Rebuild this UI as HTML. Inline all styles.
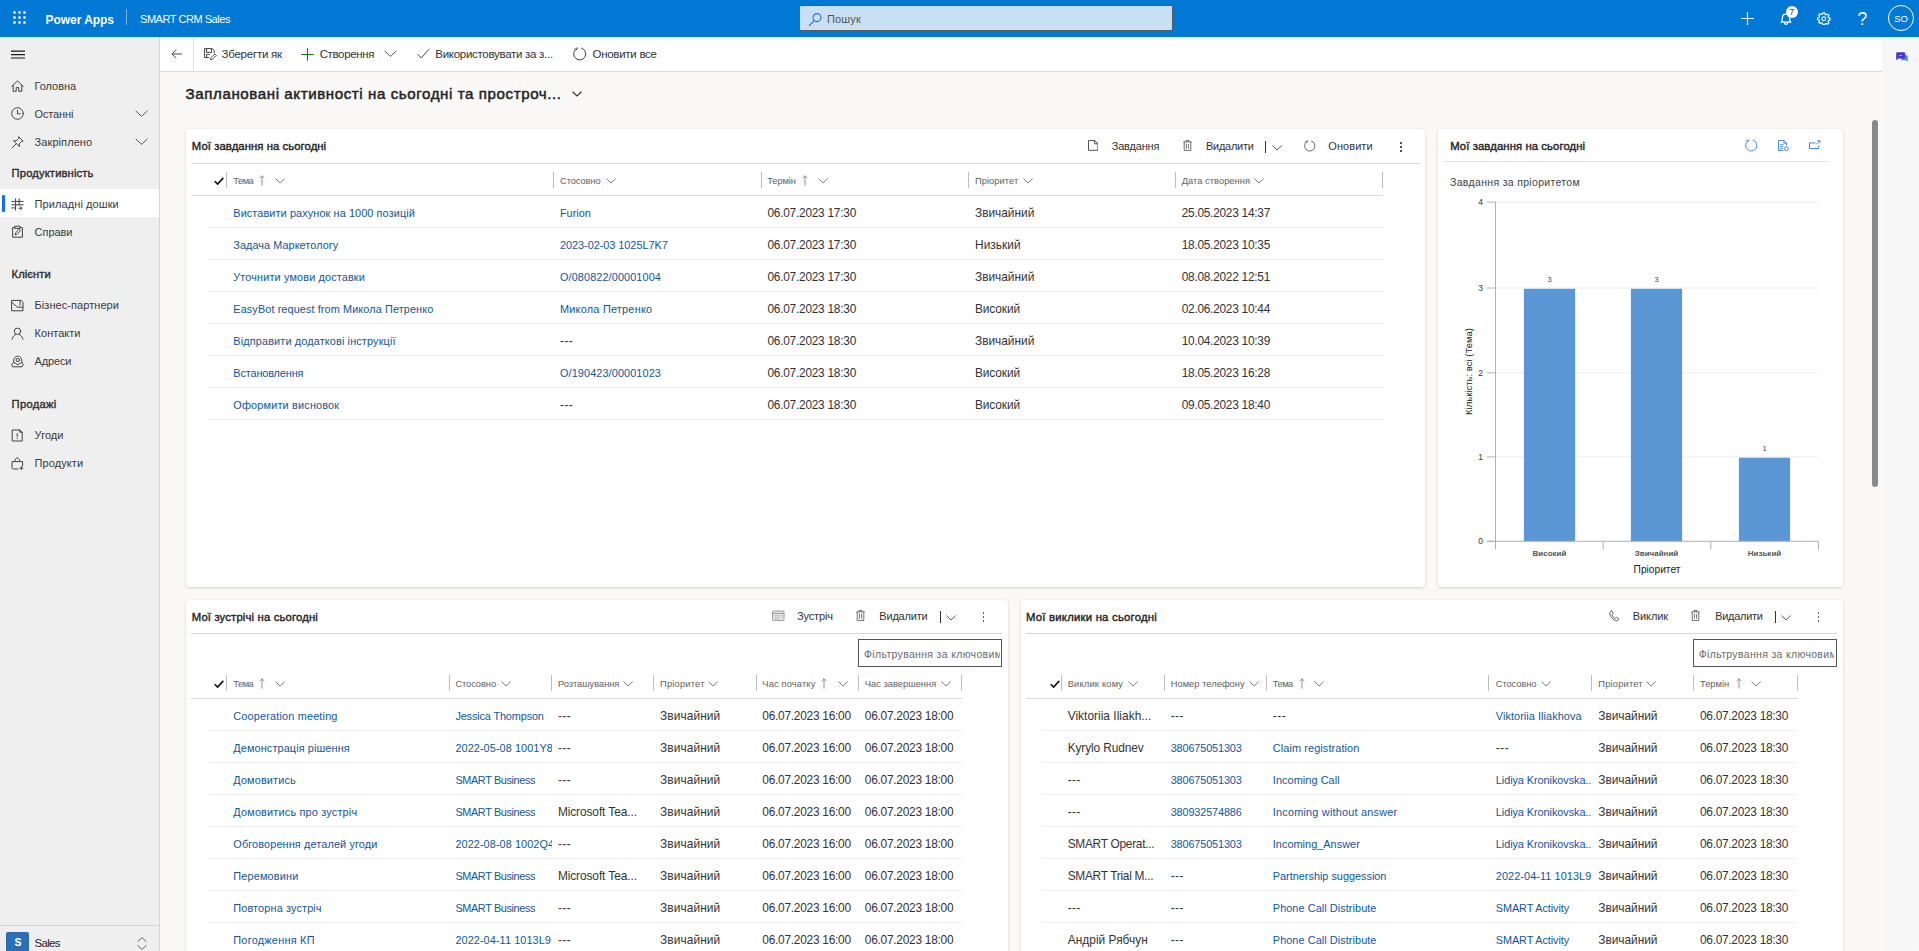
<!DOCTYPE html>
<html lang="uk"><head><meta charset="utf-8"><title>SMART CRM Sales</title>
<style>
html,body{margin:0;padding:0;}
body{width:1919px;height:951px;overflow:hidden;position:relative;background:#faf9f8;font-family:'Liberation Sans',sans-serif;}
.a{position:absolute;box-sizing:border-box;}
.t{position:absolute;white-space:pre;}
.card{position:absolute;background:#fff;border-radius:3px;box-shadow:0 1px 3px rgba(0,0,0,.13),0 0 2px rgba(0,0,0,.08);}
</style></head><body>
<aside aria-label="side pane">
<div class="a" style="left:1882px;top:37px;width:37px;height:914px;background:#f7f7f7;background:repeating-conic-gradient(#f3f3f3 0% 25%,#fbfbfb 0% 50%) 0 0/2px 2px;"></div>
</aside>
<header>
<div class="a" style="left:0px;top:0px;width:1919px;height:37px;background:#0078d4;"></div>
<svg class="a" style="left:12.5px;top:11px;" width="13" height="13" viewBox="0 0 13 13" fill="none"><rect x="0.3" y="0.3" width="2.4" height="2.4" rx=".6" fill="#fff"/><rect x="0.3" y="5.3" width="2.4" height="2.4" rx=".6" fill="#fff"/><rect x="0.3" y="10.3" width="2.4" height="2.4" rx=".6" fill="#fff"/><rect x="5.3" y="0.3" width="2.4" height="2.4" rx=".6" fill="#fff"/><rect x="5.3" y="5.3" width="2.4" height="2.4" rx=".6" fill="#fff"/><rect x="5.3" y="10.3" width="2.4" height="2.4" rx=".6" fill="#fff"/><rect x="10.3" y="0.3" width="2.4" height="2.4" rx=".6" fill="#fff"/><rect x="10.3" y="5.3" width="2.4" height="2.4" rx=".6" fill="#fff"/><rect x="10.3" y="10.3" width="2.4" height="2.4" rx=".6" fill="#fff"/></svg>
<span class="t" style="left:45.60px;top:12px;font-size:12px;line-height:17px;color:#fff;letter-spacing:-0.051px;font-weight:bold;">Power Apps</span>
<div class="a" style="left:126px;top:9px;width:1px;height:16px;background:rgba(255,255,255,.45);"></div>
<span class="t" style="left:140.00px;top:12px;font-size:11px;line-height:15px;color:#fff;letter-spacing:-0.453px;">SMART CRM Sales</span>
<div class="a" style="left:799px;top:5px;width:374px;height:26px;background:#c7e0f4;border:1px solid #5a5a5a;border-radius:2px;"></div>
<svg class="a" style="left:808px;top:11.6px;" width="15" height="15" viewBox="0 0 15 15" fill="none"><circle cx="9" cy="5.6" r="4" stroke="#2b6cb8" stroke-width="1.1"/><path d="M6.2 8.6 L1 13.8" stroke="#2b6cb8" stroke-width="1.1"/></svg>
<span class="t" style="left:827.00px;top:12px;font-size:11px;line-height:15px;color:#555;letter-spacing:0.166px;">Пошук</span>
<svg class="a" style="left:1741px;top:12px;" width="13" height="13" viewBox="0 0 13 13" fill="none"><path d="M6.5 0v13M0 6.5h13" stroke="#fff" stroke-width="1.15"/></svg>
<svg class="a" style="left:1780px;top:12.6px;" width="12" height="12.5" viewBox="0 0 12 12.5" fill="none"><path d="M1.2 9.2c1-1 1.2-2 1.2-4.4C2.4 2.4 4 1 6 1s3.6 1.4 3.6 3.8c0 2.4.2 3.4 1.2 4.4z" stroke="#fff" stroke-width="1.2" stroke-linejoin="round"/><path d="M4.3 9.6c.2 1.1.8 1.7 1.7 1.7s1.5-.6 1.7-1.7" stroke="#fff" stroke-width="1.2"/></svg>
<div class="a" style="left:1786px;top:5.5px;width:12px;height:12px;border-radius:50%;background:#fff;"></div>
<span class="t" style="left:1789.60px;top:6px;font-size:8.5px;line-height:12px;color:#4b2a7a;letter-spacing:0.000px;">7</span>
<svg class="a" style="left:1817.2px;top:11.7px;" width="13.6" height="13.6" viewBox="0 0 15 15" fill="none"><circle cx="7.5" cy="7.5" r="2.1" stroke="#fff" stroke-width="1.25"/><path d="M6.4 1h2.2l.35 1.7 1.2.5 1.45-.95 1.55 1.55-.95 1.45.5 1.2 1.7.35v2.2l-1.7.35-.5 1.2.95 1.45-1.55 1.55-1.45-.95-1.2.5L8.6 14H6.4l-.35-1.7-1.2-.5-1.45.95L1.85 11.2l.95-1.45-.5-1.2L.6 8.6V6.4l1.7-.35.5-1.2-.95-1.45L3.4 1.85l1.45.95 1.2-.5z" stroke="#fff" stroke-width="1.25" stroke-linejoin="round"/></svg>
<span class="t" style="left:1857.40px;top:7px;font-size:17.5px;line-height:24px;color:#fff;letter-spacing:0.000px;">?</span>
<div class="a" style="left:1887.5px;top:4.8px;width:26.5px;height:26.5px;border-radius:50%;border:1px solid #fff;"></div>
<span class="t" style="left:1894.20px;top:12px;font-size:9.5px;line-height:13px;color:#fff;letter-spacing:-0.067px;">SO</span>
</header>
<nav>
<div class="a" style="left:0px;top:37px;width:159px;height:914px;background:#efefef;"></div>
<div class="a" style="left:159px;top:37px;width:1px;height:914px;background:#d6d6d6;"></div>
<svg class="a" style="left:11px;top:50px;" width="14" height="9" viewBox="0 0 14 9" fill="none"><path d="M0 1.2h14M0 4.6h14M0 8h14" stroke="#1b1b1b" stroke-width="1.2"/></svg>
<div class="a" style="left:0px;top:189px;width:159px;height:28px;background:#fff;"></div>
<div class="a" style="left:2px;top:194.5px;width:3px;height:17px;background:#0f6cff;border-radius:1px;"></div>
<span class="t" style="left:34.60px;top:79px;font-size:11px;line-height:15px;color:#3b3a39;letter-spacing:-0.042px;">Головна</span>
<span class="t" style="left:34.60px;top:107px;font-size:11px;line-height:15px;color:#3b3a39;letter-spacing:-0.155px;">Останні</span>
<span class="t" style="left:34.60px;top:135px;font-size:11px;line-height:15px;color:#3b3a39;letter-spacing:0.077px;">Закріплено</span>
<span class="t" style="left:11.60px;top:165px;font-size:11.2px;line-height:16px;color:#323130;letter-spacing:0.148px;-webkit-text-stroke:0.4px #323130;">Продуктивність</span>
<span class="t" style="left:34.60px;top:197px;font-size:11px;line-height:15px;color:#3b3a39;letter-spacing:0.085px;">Приладні дошки</span>
<span class="t" style="left:34.60px;top:225px;font-size:11px;line-height:15px;color:#3b3a39;letter-spacing:-0.054px;">Справи</span>
<span class="t" style="left:11.60px;top:266px;font-size:11.2px;line-height:16px;color:#323130;letter-spacing:0.072px;-webkit-text-stroke:0.4px #323130;">Клієнти</span>
<span class="t" style="left:34.60px;top:298px;font-size:11px;line-height:15px;color:#3b3a39;letter-spacing:0.059px;">Бізнес-партнери</span>
<span class="t" style="left:34.60px;top:326px;font-size:11px;line-height:15px;color:#3b3a39;letter-spacing:0.017px;">Контакти</span>
<span class="t" style="left:34.60px;top:354px;font-size:11px;line-height:15px;color:#3b3a39;letter-spacing:-0.173px;">Адреси</span>
<span class="t" style="left:11.60px;top:396px;font-size:11.2px;line-height:16px;color:#323130;letter-spacing:0.290px;-webkit-text-stroke:0.4px #323130;">Продажі</span>
<span class="t" style="left:34.60px;top:428px;font-size:11px;line-height:15px;color:#3b3a39;letter-spacing:0.039px;">Угоди</span>
<span class="t" style="left:34.60px;top:456px;font-size:11px;line-height:15px;color:#3b3a39;letter-spacing:0.083px;">Продукти</span>
<svg class="a" style="left:11px;top:79.5px;" width="13" height="13" viewBox="0 0 13 13" fill="none"><path d="M.8 6.3 6.5.9l5.7 5.4M2.2 5.4v5.9h3V7.6h2.6v3.7h3V5.4" stroke="#424242" stroke-width="1" stroke-linejoin="round" stroke-linecap="round"/></svg>
<svg class="a" style="left:11px;top:107px;" width="13" height="13" viewBox="0 0 13 13" fill="none"><circle cx="6.5" cy="6.5" r="5.8" stroke="#424242" stroke-width="1" stroke-linejoin="round" stroke-linecap="round"/><path d="M6.5 3.2v3.6h2.6" stroke="#424242" stroke-width="1" stroke-linejoin="round" stroke-linecap="round"/></svg>
<svg class="a" style="left:11px;top:135.5px;" width="13" height="13" viewBox="0 0 13 13" fill="none"><path d="M7.8.9l4.3 4.3-1.6.4-2.2 2.2.1 2.8-5.9-5.9 2.8.1 2.2-2.2zM5.3 7.7.9 12.1" stroke="#424242" stroke-width="1" stroke-linejoin="round" stroke-linecap="round"/></svg>
<svg class="a" style="left:11px;top:197.5px;" width="13" height="13" viewBox="0 0 13 13" fill="none"><path d="M4.6.8v11.4M8.2.8v6.4M.8 3.4h11.4M.8 6.8h11.4M.8 9.9h3.8M7.6 10.2h2.8M9.6 8.8l1.6 1.4-1.6 1.4" stroke="#424242" stroke-width="1" stroke-linejoin="round" stroke-linecap="round"/></svg>
<svg class="a" style="left:11px;top:224.5px;" width="13" height="13" viewBox="0 0 13 13" fill="none"><path d="M3.8 2.6H1.6v9.6h9.8V2.6H9.2M4 1.2h5v2.2H4zM4.2 9.6l.5-1.9 3.6-3.6 1.4 1.4-3.6 3.6z" stroke="#424242" stroke-width="1" stroke-linejoin="round" stroke-linecap="round"/></svg>
<svg class="a" style="left:11px;top:298.5px;" width="13" height="13" viewBox="0 0 13 13" fill="none"><path d="M1 1.4h9.2l1.8 1.8v8.6H1zM1.2 3.6l5.2 4.6h5.4M9 1.6v4.6" stroke="#424242" stroke-width="1" stroke-linejoin="round" stroke-linecap="round"/></svg>
<svg class="a" style="left:11px;top:326.5px;" width="13" height="13" viewBox="0 0 13 13" fill="none"><circle cx="6.5" cy="4.3" r="3.2" stroke="#424242" stroke-width="1" stroke-linejoin="round" stroke-linecap="round"/><path d="M1 12.2c.6-2.6 2.4-4.3 3.6-4.6M12 12.2c-.6-2.6-2.4-4.3-3.6-4.6" stroke="#424242" stroke-width="1" stroke-linejoin="round" stroke-linecap="round"/></svg>
<svg class="a" style="left:11px;top:354.5px;" width="13" height="13" viewBox="0 0 13 13" fill="none"><path d="M2.6 7.2C2.4 3.6 4 1.2 6.8 1.2s4.3 2.4 4.1 6M.8 9.6l1.8-2.4 4.2 2.6 4.1-2.6 1.4 2.4-1.2 2.2H2z" stroke="#424242" stroke-width="1" stroke-linejoin="round" stroke-linecap="round"/><circle cx="6.8" cy="5" r="1.7" stroke="#424242" stroke-width="1" stroke-linejoin="round" stroke-linecap="round"/></svg>
<svg class="a" style="left:11px;top:428.5px;" width="13" height="13" viewBox="0 0 13 13" fill="none"><path d="M1.6 1h7.2v2.2h2.4V12H1.6zM8.8 1l2.4 2.2M6.2 4.6v3M6.2 9.3v.4" stroke="#424242" stroke-width="1" stroke-linejoin="round" stroke-linecap="round"/></svg>
<svg class="a" style="left:11px;top:456.5px;" width="13" height="13" viewBox="0 0 13 13" fill="none"><path d="M7 12H2.4C1.5 12 1 11.5 1 10.6V4.6h10.6v4.2M3.8 4.6C3.8 2.3 4.8 1 6.3 1s2.5 1.3 2.5 3.6M10.4 9.6v3M8.9 11.1h3" stroke="#424242" stroke-width="1" stroke-linejoin="round" stroke-linecap="round"/></svg>
<svg class="a" style="left:135px;top:110px;" width="13" height="8" viewBox="0 0 13 8" fill="none"><path d="M.6.8l5.9 5.6L12.4.8" stroke="#555" stroke-width="1"/></svg>
<svg class="a" style="left:135px;top:138px;" width="13" height="8" viewBox="0 0 13 8" fill="none"><path d="M.6.8l5.9 5.6L12.4.8" stroke="#555" stroke-width="1"/></svg>
<div class="a" style="left:0px;top:925px;width:159px;height:1px;background:#d2d2d2;"></div>
<div class="a" style="left:6.3px;top:932px;width:22.5px;height:22.5px;background:#2b70b5;border-radius:2px;"></div>
<span class="t" style="left:14.40px;top:935px;font-size:10.5px;line-height:15px;color:#fff;letter-spacing:0.000px;font-weight:bold;">S</span>
<span class="t" style="left:34.60px;top:935px;font-size:11.5px;line-height:16px;color:#1f1f1f;letter-spacing:-0.716px;">Sales</span>
<svg class="a" style="left:136.5px;top:936.5px;" width="10" height="13" viewBox="0 0 10 13" fill="none"><path d="M.6 4.7 5 .6 9.4 4.7M.6 8.3 5 12.4 9.4 8.3" stroke="#555" stroke-width=".9"/></svg>
</nav>
<main>
<div role="toolbar">
<div class="a" style="left:160px;top:37px;width:1722px;height:34px;background:#fff;"></div>
<div class="a" style="left:160px;top:71px;width:1722px;height:1px;background:#dcdcdc;"></div>
<div class="a" style="left:193px;top:37px;width:1px;height:34px;background:#dcdcdc;"></div>
<svg class="a" style="left:171px;top:48.5px;" width="11" height="10" viewBox="0 0 11 10" fill="none"><path d="M10.8 5H.9M5.2.7.9 5l4.3 4.3" stroke="#424242" stroke-width="1"/></svg>
<svg class="a" style="left:203.5px;top:47.5px;" width="13" height="12.5" viewBox="0 0 13 12.5" fill="none"><path d="M.6.6h7.8l1.8 1.8v3M.6.6v9h4.6M2.6.8v3.6h5V.8M2.6 9.4V6.4h3.2" stroke="#424242" stroke-width="1"/><path d="M6.4 11.9l.5-2 4-4 1.5 1.5-4 4z" stroke="#424242" stroke-width=".9"/></svg>
<span class="t" style="left:221.50px;top:46px;font-size:11.5px;line-height:16px;color:#333;letter-spacing:-0.231px;">Зберегти як</span>
<svg class="a" style="left:300.5px;top:48px;" width="13" height="13" viewBox="0 0 13 13" fill="none"><path d="M6.5 .2v12.6M.2 6.5h12.6" stroke="#107c10" stroke-width="1.1"/></svg>
<span class="t" style="left:319.70px;top:46px;font-size:11.5px;line-height:16px;color:#333;letter-spacing:-0.375px;">Створення</span>
<svg class="a" style="left:384px;top:50px;" width="13" height="8" viewBox="0 0 13 8" fill="none"><path d="M.6.8l5.9 5.6L12.4.8" stroke="#555" stroke-width="1"/></svg>
<svg class="a" style="left:416.5px;top:48px;" width="13" height="11" viewBox="0 0 13 11" fill="none"><path d="M.6 6.2l3.6 3.8L12.4.8" stroke="#424242" stroke-width="1"/></svg>
<span class="t" style="left:435.30px;top:46px;font-size:11.5px;line-height:16px;color:#333;letter-spacing:-0.287px;">Використовувати за з...</span>
<svg class="a" style="left:573px;top:47.3px;" width="14" height="14" viewBox="0 0 14 14" fill="none"><path d="M8.2 1.1A6 6 0 1 1 3.4 1.9" stroke="#424242" stroke-width="1"/><path d="M3.6 .2v2.4H1.2" stroke="#424242" stroke-width="1" transform="rotate(18 3.6 2.6)"/></svg>
<span class="t" style="left:592.50px;top:46px;font-size:11.5px;line-height:16px;color:#333;letter-spacing:-0.277px;">Оновити все</span>
</div>
<span class="t" style="left:185.60px;top:83px;font-size:15.1px;line-height:21px;color:#242424;letter-spacing:0.585px;-webkit-text-stroke:0.5px #242424;">Заплановані активності на сьогодні та простроч...</span>
<svg class="a" style="left:571.5px;top:91px;" width="10" height="6" viewBox="0 0 10 6" fill="none"><path d="M.6.7l4.4 4.2L9.4.7" stroke="#333" stroke-width="1.2"/></svg>
<div class="a" style="left:1872px;top:120px;width:6px;height:367px;background:#8a8a8a;border-radius:3px;"></div>
<svg class="a" style="left:1895.5px;top:51.5px;" width="12" height="10" viewBox="0 0 12 10" fill="none"><path d="M6 3.2h4.4c.8 0 1.3.5 1.3 1.3v5.2l-1.8-1.5H5.2z" fill="#3f8ef5"/><path d="M.2 1.6C.2.7.8.2 1.6.2h6.2c.8 0 1.4.5 1.4 1.4v3.6c0 .9-.6 1.4-1.4 1.4H2.4L.2 8.2z" fill="#4b35c9"/><rect x="3.3" y="3" width="2.8" height=".9" fill="#b9aef5"/></svg>
<section aria-label="tasks">
<div class="card" style="left:186px;top:129px;width:1239px;height:458px;"></div>
<span class="t" style="left:191.80px;top:138px;font-size:11.3px;line-height:16px;color:#242424;letter-spacing:0.067px;-webkit-text-stroke:0.4px #242424;">Мої завдання на сьогодні</span>
<svg class="a" style="left:1087.5px;top:140.3px;" width="10.5" height="10.8" viewBox="0 0 10.5 10.8" fill="none"><path d="M6.6.5H.5v9.8h9.4V3.8M6.6.5v3.3h3.3M6.6.5l3.3 3.3" stroke="#424242" stroke-width=".9"/></svg>
<span class="t" style="left:1111.70px;top:139px;font-size:11px;line-height:15px;color:#333;letter-spacing:-0.203px;">Завдання</span>
<svg class="a" style="left:1182.5px;top:139.7px;" width="9" height="11" viewBox="0 0 9 11" fill="none"><path d="M.3 1.9h8.4M3 1.7V.5h3v1.2M1.2 2v8.4h6.6V2M3.4 3.8v4.8M5.6 3.8v4.8" stroke="#4a4a4a" stroke-width=".8"/></svg>
<span class="t" style="left:1206.00px;top:139px;font-size:11px;line-height:15px;color:#333;letter-spacing:-0.283px;">Видалити</span>
<div class="a" style="left:1265px;top:140.5px;width:1px;height:12px;background:#333;"></div>
<svg class="a" style="left:1272px;top:144.5px;" width="10.2" height="6" viewBox="0 0 10.2 6" fill="none"><path d="M.5.6l4.6 4.4L9.7.6" stroke="#444" stroke-width=".9"/></svg>
<svg class="a" style="left:1303.5px;top:140px;" width="12" height="12" viewBox="0 0 14 14" fill="none"><path d="M8.2 1.1A6 6 0 1 1 3.4 1.9" stroke="#424242" stroke-width="0.9"/><path d="M3.6 .2v2.4H1.2" stroke="#424242" stroke-width="0.9" transform="rotate(18 3.6 2.6)"/></svg>
<span class="t" style="left:1328.30px;top:139px;font-size:11px;line-height:15px;color:#333;letter-spacing:0.068px;">Оновити</span>
<div class="a" style="left:1400.45px;top:142.45px;width:1.1px;height:1.1px;background:#444;border-radius:50%;"></div>
<div class="a" style="left:1400.45px;top:146.45px;width:1.1px;height:1.1px;background:#444;border-radius:50%;"></div>
<div class="a" style="left:1400.45px;top:150.45px;width:1.1px;height:1.1px;background:#444;border-radius:50%;"></div>
<div class="a" style="left:191px;top:163px;width:1228.5px;height:1px;background:#d9d9d9;"></div>
<svg class="a" style="left:214px;top:176.5px;" width="10" height="8" viewBox="0 0 10 8" fill="none"><path d="M.7 4.2l2.9 2.9L9.3.9" stroke="#111" stroke-width="1.6"/></svg>
<div class="a" style="left:226px;top:172px;width:1px;height:16px;background:#bdbdbd;"></div>
<div class="a" style="left:553px;top:172px;width:1px;height:16px;background:#bdbdbd;"></div>
<div class="a" style="left:761px;top:172px;width:1px;height:16px;background:#bdbdbd;"></div>
<div class="a" style="left:968px;top:172px;width:1px;height:16px;background:#bdbdbd;"></div>
<div class="a" style="left:1175px;top:172px;width:1px;height:16px;background:#bdbdbd;"></div>
<div class="a" style="left:1382px;top:172px;width:1px;height:16px;background:#bdbdbd;"></div>
<span class="t" style="left:233.30px;top:175px;font-size:9.3px;line-height:13px;color:#616161;letter-spacing:-0.473px;">Тема</span>
<svg class="a" style="left:259.3px;top:175.0px;" width="6" height="11" viewBox="0 0 6 11" fill="none"><path d="M3 10.6V.8M.6 3.2 3 .8l2.4 2.4" stroke="#777" stroke-width=".8"/></svg>
<svg class="a" style="left:275px;top:177.8px;" width="10.2" height="6" viewBox="0 0 10.2 6" fill="none"><path d="M.5.6l4.6 4.4L9.7.6" stroke="#6a6a6a" stroke-width=".9"/></svg>
<span class="t" style="left:560.00px;top:175px;font-size:9.3px;line-height:13px;color:#616161;letter-spacing:-0.077px;">Стосовно</span>
<svg class="a" style="left:605.5px;top:177.8px;" width="10.2" height="6" viewBox="0 0 10.2 6" fill="none"><path d="M.5.6l4.6 4.4L9.7.6" stroke="#6a6a6a" stroke-width=".9"/></svg>
<span class="t" style="left:767.30px;top:175px;font-size:9.3px;line-height:13px;color:#616161;letter-spacing:-0.116px;">Термін</span>
<svg class="a" style="left:802px;top:175.0px;" width="6" height="11" viewBox="0 0 6 11" fill="none"><path d="M3 10.6V.8M.6 3.2 3 .8l2.4 2.4" stroke="#777" stroke-width=".8"/></svg>
<svg class="a" style="left:818px;top:177.8px;" width="10.2" height="6" viewBox="0 0 10.2 6" fill="none"><path d="M.5.6l4.6 4.4L9.7.6" stroke="#6a6a6a" stroke-width=".9"/></svg>
<span class="t" style="left:975.00px;top:175px;font-size:9.3px;line-height:13px;color:#616161;letter-spacing:0.063px;">Пріоритет</span>
<svg class="a" style="left:1022.7px;top:177.8px;" width="10.2" height="6" viewBox="0 0 10.2 6" fill="none"><path d="M.5.6l4.6 4.4L9.7.6" stroke="#6a6a6a" stroke-width=".9"/></svg>
<span class="t" style="left:1181.70px;top:175px;font-size:9.3px;line-height:13px;color:#616161;letter-spacing:0.040px;">Дата створення</span>
<svg class="a" style="left:1254.3px;top:177.8px;" width="10.2" height="6" viewBox="0 0 10.2 6" fill="none"><path d="M.5.6l4.6 4.4L9.7.6" stroke="#6a6a6a" stroke-width=".9"/></svg>
<div class="a" style="left:191px;top:195px;width:1192px;height:1px;background:#d9d9d9;"></div>
<span class="t" style="left:233.30px;top:206px;font-size:10.9px;line-height:15px;color:#0f5899;letter-spacing:0.093px;">Виставити рахунок на 1000 позицій</span>
<span class="t" style="left:560.00px;top:206px;font-size:10.9px;line-height:15px;color:#0f5899;letter-spacing:-0.029px;">Furion</span>
<span class="t" style="left:767.50px;top:205px;font-size:11.9px;line-height:16px;color:#333;letter-spacing:-0.255px;">06.07.2023 17:30</span>
<span class="t" style="left:975.00px;top:205px;font-size:11.9px;line-height:16px;color:#333;letter-spacing:-0.017px;">Звичайний</span>
<span class="t" style="left:1181.70px;top:205px;font-size:11.9px;line-height:16px;color:#333;letter-spacing:-0.267px;">25.05.2023 14:37</span>
<div class="a" style="left:207px;top:227px;width:1176px;height:1px;background:#ededed;"></div>
<span class="t" style="left:233.30px;top:238px;font-size:10.9px;line-height:15px;color:#0f5899;letter-spacing:0.050px;">Задача Маркетологу</span>
<span class="t" style="left:560.00px;top:238px;font-size:10.9px;line-height:15px;color:#0f5899;letter-spacing:-0.037px;">2023-02-03 1025L7K7</span>
<span class="t" style="left:767.50px;top:237px;font-size:11.9px;line-height:16px;color:#333;letter-spacing:-0.255px;">06.07.2023 17:30</span>
<span class="t" style="left:975.00px;top:237px;font-size:11.9px;line-height:16px;color:#333;letter-spacing:0.046px;">Низький</span>
<span class="t" style="left:1181.70px;top:237px;font-size:11.9px;line-height:16px;color:#333;letter-spacing:-0.267px;">18.05.2023 10:35</span>
<div class="a" style="left:207px;top:259px;width:1176px;height:1px;background:#ededed;"></div>
<span class="t" style="left:233.30px;top:270px;font-size:10.9px;line-height:15px;color:#0f5899;letter-spacing:0.132px;">Уточнити умови доставки</span>
<span class="t" style="left:560.00px;top:270px;font-size:10.9px;line-height:15px;color:#0f5899;letter-spacing:0.098px;">O/080822/00001004</span>
<span class="t" style="left:767.50px;top:269px;font-size:11.9px;line-height:16px;color:#333;letter-spacing:-0.255px;">06.07.2023 17:30</span>
<span class="t" style="left:975.00px;top:269px;font-size:11.9px;line-height:16px;color:#333;letter-spacing:-0.017px;">Звичайний</span>
<span class="t" style="left:1181.70px;top:269px;font-size:11.9px;line-height:16px;color:#333;letter-spacing:-0.267px;">08.08.2022 12:51</span>
<div class="a" style="left:207px;top:291px;width:1176px;height:1px;background:#ededed;"></div>
<span class="t" style="left:233.30px;top:302px;font-size:10.9px;line-height:15px;color:#0f5899;letter-spacing:0.094px;">EasyBot request from Микола Петренко</span>
<span class="t" style="left:560.00px;top:302px;font-size:10.9px;line-height:15px;color:#0f5899;letter-spacing:0.227px;">Микола Петренко</span>
<span class="t" style="left:767.50px;top:301px;font-size:11.9px;line-height:16px;color:#333;letter-spacing:-0.255px;">06.07.2023 18:30</span>
<span class="t" style="left:975.00px;top:301px;font-size:11.9px;line-height:16px;color:#333;letter-spacing:-0.109px;">Високий</span>
<span class="t" style="left:1181.70px;top:301px;font-size:11.9px;line-height:16px;color:#333;letter-spacing:-0.267px;">02.06.2023 10:44</span>
<div class="a" style="left:207px;top:323px;width:1176px;height:1px;background:#ededed;"></div>
<span class="t" style="left:233.30px;top:334px;font-size:10.9px;line-height:15px;color:#0f5899;letter-spacing:0.132px;">Відправити додаткові інструкції</span>
<span class="t" style="left:560.00px;top:333px;font-size:11.9px;line-height:16px;color:#333;letter-spacing:0.470px;">---</span>
<span class="t" style="left:767.50px;top:333px;font-size:11.9px;line-height:16px;color:#333;letter-spacing:-0.255px;">06.07.2023 18:30</span>
<span class="t" style="left:975.00px;top:333px;font-size:11.9px;line-height:16px;color:#333;letter-spacing:-0.017px;">Звичайний</span>
<span class="t" style="left:1181.70px;top:333px;font-size:11.9px;line-height:16px;color:#333;letter-spacing:-0.267px;">10.04.2023 10:39</span>
<div class="a" style="left:207px;top:355px;width:1176px;height:1px;background:#ededed;"></div>
<span class="t" style="left:233.30px;top:366px;font-size:10.9px;line-height:15px;color:#0f5899;letter-spacing:-0.132px;">Встановлення</span>
<span class="t" style="left:560.00px;top:366px;font-size:10.9px;line-height:15px;color:#0f5899;letter-spacing:0.098px;">O/190423/00001023</span>
<span class="t" style="left:767.50px;top:365px;font-size:11.9px;line-height:16px;color:#333;letter-spacing:-0.255px;">06.07.2023 18:30</span>
<span class="t" style="left:975.00px;top:365px;font-size:11.9px;line-height:16px;color:#333;letter-spacing:-0.109px;">Високий</span>
<span class="t" style="left:1181.70px;top:365px;font-size:11.9px;line-height:16px;color:#333;letter-spacing:-0.267px;">18.05.2023 16:28</span>
<div class="a" style="left:207px;top:387px;width:1176px;height:1px;background:#ededed;"></div>
<span class="t" style="left:233.30px;top:398px;font-size:10.9px;line-height:15px;color:#0f5899;letter-spacing:0.171px;">Оформити висновок</span>
<span class="t" style="left:560.00px;top:397px;font-size:11.9px;line-height:16px;color:#333;letter-spacing:0.470px;">---</span>
<span class="t" style="left:767.50px;top:397px;font-size:11.9px;line-height:16px;color:#333;letter-spacing:-0.255px;">06.07.2023 18:30</span>
<span class="t" style="left:975.00px;top:397px;font-size:11.9px;line-height:16px;color:#333;letter-spacing:-0.109px;">Високий</span>
<span class="t" style="left:1181.70px;top:397px;font-size:11.9px;line-height:16px;color:#333;letter-spacing:-0.267px;">09.05.2023 18:40</span>
<div class="a" style="left:207px;top:419px;width:1176px;height:1px;background:#ededed;"></div>
</section>
<section aria-label="chart">
<div class="card" style="left:1438px;top:129px;width:405px;height:458px;"></div>
<span class="t" style="left:1450.20px;top:138px;font-size:11.3px;line-height:16px;color:#242424;letter-spacing:0.092px;-webkit-text-stroke:0.4px #242424;">Мої завдання на сьогодні</span>
<svg class="a" style="left:1745px;top:138.5px;" width="13" height="13" viewBox="0 0 14 14" fill="none"><path d="M8.2 1.1A6 6 0 1 1 3.4 1.9" stroke="#3181d4" stroke-width="0.95"/><path d="M3.6 .2v2.4H1.2" stroke="#3181d4" stroke-width="0.95" transform="rotate(18 3.6 2.6)"/></svg>
<svg class="a" style="left:1777.5px;top:139.5px;" width="11" height="11.5" viewBox="0 0 11 11.5" fill="none"><path d="M.5.5h5.6l2.4 2.4v2.6M.5.5v10h4.8M5.9.7v2.4h2.4M2.2 4.8h3.4M2.2 6.8h3M2.2 8.6h2.4" stroke="#3181d4" stroke-width=".9"/><circle cx="8.3" cy="8.7" r="1.9" stroke="#3181d4" stroke-width=".9"/></svg>
<svg class="a" style="left:1809px;top:140.4px;" width="12" height="9.2" viewBox="0 0 12 9.2" fill="none"><path d="M6.6 2.9H.5v5.6h9.2V5.4" stroke="#3181d4" stroke-width=".95"/><path d="M7.2 4.4 10.7.9M8.3.7h2.6v2.6" stroke="#3181d4" stroke-width=".9"/></svg>
<div class="a" style="left:1444px;top:161px;width:385.5px;height:1px;background:#e4e4e4;"></div>
<span class="t" style="left:1450.00px;top:175px;font-size:10.5px;line-height:15px;color:#444;letter-spacing:0.317px;">Завдання за пріоритетом</span>
<svg class="a" style="left:0;top:0;" width="1919" height="951" viewBox="0 0 1919 951"><line x1="1487.0" y1="541.3" x2="1495.5" y2="541.3" stroke="#b0b0b8" stroke-width="1"/><text x="1483.0" y="544.2" font-size="8.5" fill="#333" text-anchor="end" font-family="Liberation Sans, sans-serif">0</text><line x1="1495.5" y1="456.9" x2="1818.6" y2="456.9" stroke="#ececf4" stroke-width="1"/><line x1="1487.0" y1="456.9" x2="1495.5" y2="456.9" stroke="#b0b0b8" stroke-width="1"/><text x="1483.0" y="459.8" font-size="8.5" fill="#333" text-anchor="end" font-family="Liberation Sans, sans-serif">1</text><line x1="1495.5" y1="372.8" x2="1818.6" y2="372.8" stroke="#ececf4" stroke-width="1"/><line x1="1487.0" y1="372.8" x2="1495.5" y2="372.8" stroke="#b0b0b8" stroke-width="1"/><text x="1483.0" y="375.7" font-size="8.5" fill="#333" text-anchor="end" font-family="Liberation Sans, sans-serif">2</text><line x1="1495.5" y1="288.0" x2="1818.6" y2="288.0" stroke="#ececf4" stroke-width="1"/><line x1="1487.0" y1="288.0" x2="1495.5" y2="288.0" stroke="#b0b0b8" stroke-width="1"/><text x="1483.0" y="290.9" font-size="8.5" fill="#333" text-anchor="end" font-family="Liberation Sans, sans-serif">3</text><line x1="1495.5" y1="202.1" x2="1818.6" y2="202.1" stroke="#ececf4" stroke-width="1"/><line x1="1487.0" y1="202.1" x2="1495.5" y2="202.1" stroke="#b0b0b8" stroke-width="1"/><text x="1483.0" y="205.0" font-size="8.5" fill="#333" text-anchor="end" font-family="Liberation Sans, sans-serif">4</text><rect x="1523.9" y="288.8" width="51.2" height="252.5" fill="#5b96d5"/><text x="1549.5" y="282.0" font-size="7.5" fill="#444" text-anchor="middle" font-family="Liberation Sans, sans-serif">3</text><text x="1549.5" y="555.7" font-size="8" font-weight="bold" fill="#555" text-anchor="middle" font-family="Liberation Sans, sans-serif">Високий</text><rect x="1630.9" y="288.8" width="51.2" height="252.5" fill="#5b96d5"/><text x="1656.5" y="282.0" font-size="7.5" fill="#444" text-anchor="middle" font-family="Liberation Sans, sans-serif">3</text><text x="1656.5" y="555.7" font-size="8" font-weight="bold" fill="#555" text-anchor="middle" font-family="Liberation Sans, sans-serif">Звичайний</text><rect x="1738.9" y="457.7" width="51.2" height="83.6" fill="#5b96d5"/><text x="1764.5" y="450.9" font-size="7.5" fill="#444" text-anchor="middle" font-family="Liberation Sans, sans-serif">1</text><text x="1764.5" y="555.7" font-size="8" font-weight="bold" fill="#555" text-anchor="middle" font-family="Liberation Sans, sans-serif">Низький</text><line x1="1495.5" y1="202.1" x2="1495.5" y2="549.3" stroke="#b0b0b8" stroke-width="1"/><line x1="1487.0" y1="541.3" x2="1818.6" y2="541.3" stroke="#b0b0b8" stroke-width="1"/><line x1="1603.2" y1="541.3" x2="1603.2" y2="549.5999999999999" stroke="#b0b0b8" stroke-width="1"/><line x1="1710.8" y1="541.3" x2="1710.8" y2="549.5999999999999" stroke="#b0b0b8" stroke-width="1"/><line x1="1818.5" y1="541.3" x2="1818.5" y2="549.5999999999999" stroke="#b0b0b8" stroke-width="1"/><text x="1657" y="573.4" font-size="10.2" fill="#222" text-anchor="middle" font-family="Liberation Sans, sans-serif">Пріоритет</text><text transform="translate(1472 371.5) rotate(-90)" font-size="9.5" fill="#222" text-anchor="middle" font-family="Liberation Sans, sans-serif">Кількість: всі (Тема)</text></svg>
</section>
<section aria-label="meetings">
<div class="card" style="left:186px;top:600px;width:822px;height:400px;"></div>
<span class="t" style="left:191.70px;top:609px;font-size:11.3px;line-height:16px;color:#242424;letter-spacing:0.156px;-webkit-text-stroke:0.4px #242424;">Мої зустрічі на сьогодні</span>
<svg class="a" style="left:772px;top:609.8px;" width="12.5" height="11" viewBox="0 0 12.5 11" fill="none"><rect x=".5" y="1" width="11.5" height="9.4" rx=".8" fill="#ececec" stroke="#8f8f8f" stroke-width=".9"/><path d="M.5 3.4h11.5" stroke="#8f8f8f" stroke-width=".9"/><path d="M2.2 5.4h8.2M2.2 7.1h8.2M2.2 8.8h5.4" stroke="#a8a8a8" stroke-width=".9" stroke-dasharray="1.5 .7"/></svg>
<span class="t" style="left:796.90px;top:609px;font-size:11px;line-height:15px;color:#333;letter-spacing:-0.123px;">Зустріч</span>
<svg class="a" style="left:856.3px;top:609.7px;" width="9" height="11" viewBox="0 0 9 11" fill="none"><path d="M.3 1.9h8.4M3 1.7V.5h3v1.2M1.2 2v8.4h6.6V2M3.4 3.8v4.8M5.6 3.8v4.8" stroke="#4a4a4a" stroke-width=".8"/></svg>
<span class="t" style="left:879.30px;top:609px;font-size:11px;line-height:15px;color:#333;letter-spacing:-0.196px;">Видалити</span>
<div class="a" style="left:939.7px;top:610.5px;width:1px;height:12px;background:#333;"></div>
<svg class="a" style="left:946px;top:614.5px;" width="10.2" height="6" viewBox="0 0 10.2 6" fill="none"><path d="M.5.6l4.6 4.4L9.7.6" stroke="#444" stroke-width=".9"/></svg>
<div class="a" style="left:983.1500000000001px;top:612.45px;width:1.1px;height:1.1px;background:#444;border-radius:50%;"></div>
<div class="a" style="left:983.1500000000001px;top:616.45px;width:1.1px;height:1.1px;background:#444;border-radius:50%;"></div>
<div class="a" style="left:983.1500000000001px;top:620.45px;width:1.1px;height:1.1px;background:#444;border-radius:50%;"></div>
<div class="a" style="left:191px;top:633px;width:811px;height:1px;background:#d9d9d9;"></div>
<div class="a" style="left:858.4px;top:639.2px;width:143.6px;height:27.6px;background:#fff;border:1px solid #555;"></div>
<span class="t" style="left:864.00px;top:647px;font-size:10.5px;line-height:15px;color:#6b6b6b;letter-spacing:0.325px;width:135.6px;overflow:hidden;">Фільтрування за ключовим</span>
<svg class="a" style="left:214px;top:679.5px;" width="10" height="8" viewBox="0 0 10 8" fill="none"><path d="M.7 4.2l2.9 2.9L9.3.9" stroke="#111" stroke-width="1.6"/></svg>
<div class="a" style="left:226px;top:675px;width:1px;height:16px;background:#bdbdbd;"></div>
<div class="a" style="left:448.5px;top:675px;width:1px;height:16px;background:#bdbdbd;"></div>
<div class="a" style="left:551px;top:675px;width:1px;height:16px;background:#bdbdbd;"></div>
<div class="a" style="left:653.3px;top:675px;width:1px;height:16px;background:#bdbdbd;"></div>
<div class="a" style="left:756.3px;top:675px;width:1px;height:16px;background:#bdbdbd;"></div>
<div class="a" style="left:858.3px;top:675px;width:1px;height:16px;background:#bdbdbd;"></div>
<div class="a" style="left:961.3px;top:675px;width:1px;height:16px;background:#bdbdbd;"></div>
<span class="t" style="left:233.30px;top:678px;font-size:9.3px;line-height:13px;color:#616161;letter-spacing:-0.473px;">Тема</span>
<svg class="a" style="left:259.3px;top:678.0px;" width="6" height="11" viewBox="0 0 6 11" fill="none"><path d="M3 10.6V.8M.6 3.2 3 .8l2.4 2.4" stroke="#777" stroke-width=".8"/></svg>
<svg class="a" style="left:275px;top:680.8px;" width="10.2" height="6" viewBox="0 0 10.2 6" fill="none"><path d="M.5.6l4.6 4.4L9.7.6" stroke="#6a6a6a" stroke-width=".9"/></svg>
<span class="t" style="left:455.40px;top:678px;font-size:9.3px;line-height:13px;color:#616161;letter-spacing:-0.077px;">Стосовно</span>
<svg class="a" style="left:501px;top:680.8px;" width="10.2" height="6" viewBox="0 0 10.2 6" fill="none"><path d="M.5.6l4.6 4.4L9.7.6" stroke="#6a6a6a" stroke-width=".9"/></svg>
<span class="t" style="left:557.90px;top:678px;font-size:9.3px;line-height:13px;color:#616161;letter-spacing:-0.031px;">Розташування</span>
<svg class="a" style="left:623.4px;top:680.8px;" width="10.2" height="6" viewBox="0 0 10.2 6" fill="none"><path d="M.5.6l4.6 4.4L9.7.6" stroke="#6a6a6a" stroke-width=".9"/></svg>
<span class="t" style="left:660.10px;top:678px;font-size:9.3px;line-height:13px;color:#616161;letter-spacing:0.196px;">Пріоритет</span>
<svg class="a" style="left:708.3px;top:680.8px;" width="10.2" height="6" viewBox="0 0 10.2 6" fill="none"><path d="M.5.6l4.6 4.4L9.7.6" stroke="#6a6a6a" stroke-width=".9"/></svg>
<span class="t" style="left:762.30px;top:678px;font-size:9.3px;line-height:13px;color:#616161;letter-spacing:0.155px;">Час початку</span>
<svg class="a" style="left:820.8px;top:678.0px;" width="6" height="11" viewBox="0 0 6 11" fill="none"><path d="M3 10.6V.8M.6 3.2 3 .8l2.4 2.4" stroke="#777" stroke-width=".8"/></svg>
<svg class="a" style="left:837.5px;top:680.8px;" width="10.2" height="6" viewBox="0 0 10.2 6" fill="none"><path d="M.5.6l4.6 4.4L9.7.6" stroke="#6a6a6a" stroke-width=".9"/></svg>
<span class="t" style="left:864.80px;top:678px;font-size:9.3px;line-height:13px;color:#616161;letter-spacing:0.019px;">Час завершення</span>
<svg class="a" style="left:941.2px;top:680.8px;" width="10.2" height="6" viewBox="0 0 10.2 6" fill="none"><path d="M.5.6l4.6 4.4L9.7.6" stroke="#6a6a6a" stroke-width=".9"/></svg>
<div class="a" style="left:191px;top:698px;width:771px;height:1px;background:#d9d9d9;"></div>
<span class="t" style="left:233.30px;top:709px;font-size:10.9px;line-height:15px;color:#0f5899;letter-spacing:0.168px;">Cooperation meeting</span>
<span class="t" style="left:455.40px;top:709px;font-size:10.9px;line-height:15px;color:#0f5899;letter-spacing:-0.138px;">Jessica Thompson</span>
<span class="t" style="left:557.90px;top:708px;font-size:11.9px;line-height:16px;color:#333;letter-spacing:0.470px;">---</span>
<span class="t" style="left:660.10px;top:708px;font-size:11.9px;line-height:16px;color:#333;letter-spacing:0.083px;">Звичайний</span>
<span class="t" style="left:762.30px;top:708px;font-size:11.9px;line-height:16px;color:#333;letter-spacing:-0.255px;">06.07.2023 16:00</span>
<span class="t" style="left:864.80px;top:708px;font-size:11.9px;line-height:16px;color:#333;letter-spacing:-0.255px;">06.07.2023 18:00</span>
<div class="a" style="left:207px;top:730px;width:755px;height:1px;background:#ededed;"></div>
<span class="t" style="left:233.30px;top:741px;font-size:10.9px;line-height:15px;color:#0f5899;letter-spacing:0.109px;">Демонстрація рішення</span>
<span class="t" style="left:455.40px;top:741px;font-size:10.9px;line-height:15px;color:#0f5899;letter-spacing:0.075px;width:96.3px;overflow:hidden;">2022-05-08 1001Y8</span>
<span class="t" style="left:557.90px;top:740px;font-size:11.9px;line-height:16px;color:#333;letter-spacing:0.470px;">---</span>
<span class="t" style="left:660.10px;top:740px;font-size:11.9px;line-height:16px;color:#333;letter-spacing:0.083px;">Звичайний</span>
<span class="t" style="left:762.30px;top:740px;font-size:11.9px;line-height:16px;color:#333;letter-spacing:-0.255px;">06.07.2023 16:00</span>
<span class="t" style="left:864.80px;top:740px;font-size:11.9px;line-height:16px;color:#333;letter-spacing:-0.255px;">06.07.2023 18:00</span>
<div class="a" style="left:207px;top:762px;width:755px;height:1px;background:#ededed;"></div>
<span class="t" style="left:233.30px;top:773px;font-size:10.9px;line-height:15px;color:#0f5899;letter-spacing:0.133px;">Домовитись</span>
<span class="t" style="left:455.40px;top:773px;font-size:10.9px;line-height:15px;color:#0f5899;letter-spacing:-0.375px;">SMART Business</span>
<span class="t" style="left:557.90px;top:772px;font-size:11.9px;line-height:16px;color:#333;letter-spacing:0.470px;">---</span>
<span class="t" style="left:660.10px;top:772px;font-size:11.9px;line-height:16px;color:#333;letter-spacing:0.083px;">Звичайний</span>
<span class="t" style="left:762.30px;top:772px;font-size:11.9px;line-height:16px;color:#333;letter-spacing:-0.255px;">06.07.2023 16:00</span>
<span class="t" style="left:864.80px;top:772px;font-size:11.9px;line-height:16px;color:#333;letter-spacing:-0.255px;">06.07.2023 18:00</span>
<div class="a" style="left:207px;top:794px;width:755px;height:1px;background:#ededed;"></div>
<span class="t" style="left:233.30px;top:805px;font-size:10.9px;line-height:15px;color:#0f5899;letter-spacing:0.182px;">Домовитись про зустріч</span>
<span class="t" style="left:455.40px;top:805px;font-size:10.9px;line-height:15px;color:#0f5899;letter-spacing:-0.375px;">SMART Business</span>
<span class="t" style="left:557.90px;top:804px;font-size:11.9px;line-height:16px;color:#333;letter-spacing:-0.088px;">Microsoft Tea...</span>
<span class="t" style="left:660.10px;top:804px;font-size:11.9px;line-height:16px;color:#333;letter-spacing:0.083px;">Звичайний</span>
<span class="t" style="left:762.30px;top:804px;font-size:11.9px;line-height:16px;color:#333;letter-spacing:-0.255px;">06.07.2023 16:00</span>
<span class="t" style="left:864.80px;top:804px;font-size:11.9px;line-height:16px;color:#333;letter-spacing:-0.255px;">06.07.2023 18:00</span>
<div class="a" style="left:207px;top:826px;width:755px;height:1px;background:#ededed;"></div>
<span class="t" style="left:233.30px;top:837px;font-size:10.9px;line-height:15px;color:#0f5899;letter-spacing:0.119px;">Обговорення деталей угоди</span>
<span class="t" style="left:455.40px;top:837px;font-size:10.9px;line-height:15px;color:#0f5899;letter-spacing:0.075px;width:96.3px;overflow:hidden;">2022-08-08 1002Q4</span>
<span class="t" style="left:557.90px;top:836px;font-size:11.9px;line-height:16px;color:#333;letter-spacing:0.470px;">---</span>
<span class="t" style="left:660.10px;top:836px;font-size:11.9px;line-height:16px;color:#333;letter-spacing:0.083px;">Звичайний</span>
<span class="t" style="left:762.30px;top:836px;font-size:11.9px;line-height:16px;color:#333;letter-spacing:-0.255px;">06.07.2023 16:00</span>
<span class="t" style="left:864.80px;top:836px;font-size:11.9px;line-height:16px;color:#333;letter-spacing:-0.255px;">06.07.2023 18:00</span>
<div class="a" style="left:207px;top:858px;width:755px;height:1px;background:#ededed;"></div>
<span class="t" style="left:233.30px;top:869px;font-size:10.9px;line-height:15px;color:#0f5899;letter-spacing:0.168px;">Перемовини</span>
<span class="t" style="left:455.40px;top:869px;font-size:10.9px;line-height:15px;color:#0f5899;letter-spacing:-0.375px;">SMART Business</span>
<span class="t" style="left:557.90px;top:868px;font-size:11.9px;line-height:16px;color:#333;letter-spacing:-0.088px;">Microsoft Tea...</span>
<span class="t" style="left:660.10px;top:868px;font-size:11.9px;line-height:16px;color:#333;letter-spacing:0.083px;">Звичайний</span>
<span class="t" style="left:762.30px;top:868px;font-size:11.9px;line-height:16px;color:#333;letter-spacing:-0.255px;">06.07.2023 16:00</span>
<span class="t" style="left:864.80px;top:868px;font-size:11.9px;line-height:16px;color:#333;letter-spacing:-0.255px;">06.07.2023 18:00</span>
<div class="a" style="left:207px;top:890px;width:755px;height:1px;background:#ededed;"></div>
<span class="t" style="left:233.30px;top:901px;font-size:10.9px;line-height:15px;color:#0f5899;letter-spacing:0.131px;">Повторна зустріч</span>
<span class="t" style="left:455.40px;top:901px;font-size:10.9px;line-height:15px;color:#0f5899;letter-spacing:-0.375px;">SMART Business</span>
<span class="t" style="left:557.90px;top:900px;font-size:11.9px;line-height:16px;color:#333;letter-spacing:0.470px;">---</span>
<span class="t" style="left:660.10px;top:900px;font-size:11.9px;line-height:16px;color:#333;letter-spacing:0.083px;">Звичайний</span>
<span class="t" style="left:762.30px;top:900px;font-size:11.9px;line-height:16px;color:#333;letter-spacing:-0.255px;">06.07.2023 16:00</span>
<span class="t" style="left:864.80px;top:900px;font-size:11.9px;line-height:16px;color:#333;letter-spacing:-0.255px;">06.07.2023 18:00</span>
<div class="a" style="left:207px;top:922px;width:755px;height:1px;background:#ededed;"></div>
<span class="t" style="left:233.30px;top:933px;font-size:10.9px;line-height:15px;color:#0f5899;letter-spacing:0.249px;">Погодження КП</span>
<span class="t" style="left:455.40px;top:933px;font-size:10.9px;line-height:15px;color:#0f5899;letter-spacing:0.075px;width:96.3px;overflow:hidden;">2022-04-11 1013L9</span>
<span class="t" style="left:557.90px;top:932px;font-size:11.9px;line-height:16px;color:#333;letter-spacing:0.470px;">---</span>
<span class="t" style="left:660.10px;top:932px;font-size:11.9px;line-height:16px;color:#333;letter-spacing:0.083px;">Звичайний</span>
<span class="t" style="left:762.30px;top:932px;font-size:11.9px;line-height:16px;color:#333;letter-spacing:-0.255px;">06.07.2023 16:00</span>
<span class="t" style="left:864.80px;top:932px;font-size:11.9px;line-height:16px;color:#333;letter-spacing:-0.255px;">06.07.2023 18:00</span>
<div class="a" style="left:207px;top:954px;width:755px;height:1px;background:#ededed;"></div>
</section>
<section aria-label="calls">
<div class="card" style="left:1021px;top:600px;width:822px;height:400px;"></div>
<span class="t" style="left:1026.00px;top:609px;font-size:11.3px;line-height:16px;color:#242424;letter-spacing:0.239px;-webkit-text-stroke:0.4px #242424;">Мої виклики на сьогодні</span>
<svg class="a" style="left:1608.5px;top:610px;" width="10.5" height="11.5" viewBox="0 0 10.5 11.5" fill="none"><path d="M2.7.6C1.6 1.2.8 2 .7 3c.3 3.6 3.4 7.2 7 7.8 1 0 1.7-.7 2.2-1.8L7.6 7.4 6.2 8.4C4.6 7.7 3.4 6.2 3 4.6L4.2 3.4z" stroke="#424242" stroke-width=".85" stroke-linejoin="round"/></svg>
<span class="t" style="left:1632.80px;top:609px;font-size:11px;line-height:15px;color:#333;letter-spacing:-0.083px;">Виклик</span>
<svg class="a" style="left:1691.3px;top:609.7px;" width="9" height="11" viewBox="0 0 9 11" fill="none"><path d="M.3 1.9h8.4M3 1.7V.5h3v1.2M1.2 2v8.4h6.6V2M3.4 3.8v4.8M5.6 3.8v4.8" stroke="#4a4a4a" stroke-width=".8"/></svg>
<span class="t" style="left:1715.20px;top:609px;font-size:11px;line-height:15px;color:#333;letter-spacing:-0.296px;">Видалити</span>
<div class="a" style="left:1774.5px;top:610.5px;width:1px;height:12px;background:#333;"></div>
<svg class="a" style="left:1781px;top:614.5px;" width="10.2" height="6" viewBox="0 0 10.2 6" fill="none"><path d="M.5.6l4.6 4.4L9.7.6" stroke="#444" stroke-width=".9"/></svg>
<div class="a" style="left:1817.8500000000001px;top:612.45px;width:1.1px;height:1.1px;background:#444;border-radius:50%;"></div>
<div class="a" style="left:1817.8500000000001px;top:616.45px;width:1.1px;height:1.1px;background:#444;border-radius:50%;"></div>
<div class="a" style="left:1817.8500000000001px;top:620.45px;width:1.1px;height:1.1px;background:#444;border-radius:50%;"></div>
<div class="a" style="left:1026px;top:633px;width:811px;height:1px;background:#d9d9d9;"></div>
<div class="a" style="left:1693.2px;top:639.2px;width:143.6px;height:27.6px;background:#fff;border:1px solid #555;"></div>
<span class="t" style="left:1698.80px;top:647px;font-size:10.5px;line-height:15px;color:#6b6b6b;letter-spacing:0.325px;width:135.6px;overflow:hidden;">Фільтрування за ключовим</span>
<svg class="a" style="left:1049.7px;top:679.5px;" width="10" height="8" viewBox="0 0 10 8" fill="none"><path d="M.7 4.2l2.9 2.9L9.3.9" stroke="#111" stroke-width="1.6"/></svg>
<div class="a" style="left:1061.3px;top:675px;width:1px;height:16px;background:#bdbdbd;"></div>
<div class="a" style="left:1164.3px;top:675px;width:1px;height:16px;background:#bdbdbd;"></div>
<div class="a" style="left:1266px;top:675px;width:1px;height:16px;background:#bdbdbd;"></div>
<div class="a" style="left:1488px;top:675px;width:1px;height:16px;background:#bdbdbd;"></div>
<div class="a" style="left:1591.3px;top:675px;width:1px;height:16px;background:#bdbdbd;"></div>
<div class="a" style="left:1693.3px;top:675px;width:1px;height:16px;background:#bdbdbd;"></div>
<div class="a" style="left:1796.5px;top:675px;width:1px;height:16px;background:#bdbdbd;"></div>
<span class="t" style="left:1067.70px;top:678px;font-size:9.3px;line-height:13px;color:#616161;letter-spacing:0.197px;">Виклик кому</span>
<svg class="a" style="left:1127.7px;top:680.8px;" width="10.2" height="6" viewBox="0 0 10.2 6" fill="none"><path d="M.5.6l4.6 4.4L9.7.6" stroke="#6a6a6a" stroke-width=".9"/></svg>
<span class="t" style="left:1170.70px;top:678px;font-size:9.3px;line-height:13px;color:#616161;letter-spacing:0.041px;">Номер телефону</span>
<svg class="a" style="left:1248.5px;top:680.8px;" width="10.2" height="6" viewBox="0 0 10.2 6" fill="none"><path d="M.5.6l4.6 4.4L9.7.6" stroke="#6a6a6a" stroke-width=".9"/></svg>
<span class="t" style="left:1272.80px;top:678px;font-size:9.3px;line-height:13px;color:#616161;letter-spacing:-0.473px;">Тема</span>
<svg class="a" style="left:1298.7px;top:678.0px;" width="6" height="11" viewBox="0 0 6 11" fill="none"><path d="M3 10.6V.8M.6 3.2 3 .8l2.4 2.4" stroke="#777" stroke-width=".8"/></svg>
<svg class="a" style="left:1314px;top:680.8px;" width="10.2" height="6" viewBox="0 0 10.2 6" fill="none"><path d="M.5.6l4.6 4.4L9.7.6" stroke="#6a6a6a" stroke-width=".9"/></svg>
<span class="t" style="left:1495.80px;top:678px;font-size:9.3px;line-height:13px;color:#616161;letter-spacing:-0.077px;">Стосовно</span>
<svg class="a" style="left:1541px;top:680.8px;" width="10.2" height="6" viewBox="0 0 10.2 6" fill="none"><path d="M.5.6l4.6 4.4L9.7.6" stroke="#6a6a6a" stroke-width=".9"/></svg>
<span class="t" style="left:1598.30px;top:678px;font-size:9.3px;line-height:13px;color:#616161;letter-spacing:0.196px;">Пріоритет</span>
<svg class="a" style="left:1646.4px;top:680.8px;" width="10.2" height="6" viewBox="0 0 10.2 6" fill="none"><path d="M.5.6l4.6 4.4L9.7.6" stroke="#6a6a6a" stroke-width=".9"/></svg>
<span class="t" style="left:1700.00px;top:678px;font-size:9.3px;line-height:13px;color:#616161;letter-spacing:0.018px;">Термін</span>
<svg class="a" style="left:1735.7px;top:678.0px;" width="6" height="11" viewBox="0 0 6 11" fill="none"><path d="M3 10.6V.8M.6 3.2 3 .8l2.4 2.4" stroke="#777" stroke-width=".8"/></svg>
<svg class="a" style="left:1750.5px;top:680.8px;" width="10.2" height="6" viewBox="0 0 10.2 6" fill="none"><path d="M.5.6l4.6 4.4L9.7.6" stroke="#6a6a6a" stroke-width=".9"/></svg>
<div class="a" style="left:1026px;top:698px;width:771.5px;height:1px;background:#d9d9d9;"></div>
<span class="t" style="left:1067.70px;top:708px;font-size:11.9px;line-height:16px;color:#333;letter-spacing:0.028px;">Viktoriia Iliakh...</span>
<span class="t" style="left:1170.70px;top:708px;font-size:11.9px;line-height:16px;color:#333;letter-spacing:0.470px;">---</span>
<span class="t" style="left:1272.80px;top:708px;font-size:11.9px;line-height:16px;color:#333;letter-spacing:0.470px;">---</span>
<span class="t" style="left:1495.80px;top:709px;font-size:10.9px;line-height:15px;color:#0f5899;letter-spacing:0.066px;">Viktoriia Iliakhova</span>
<span class="t" style="left:1598.30px;top:708px;font-size:11.9px;line-height:16px;color:#333;letter-spacing:-0.028px;">Звичайний</span>
<span class="t" style="left:1700.00px;top:708px;font-size:11.9px;line-height:16px;color:#333;letter-spacing:-0.286px;">06.07.2023 18:30</span>
<div class="a" style="left:1042.3px;top:730px;width:755px;height:1px;background:#ededed;"></div>
<span class="t" style="left:1067.70px;top:740px;font-size:11.9px;line-height:16px;color:#333;letter-spacing:-0.102px;">Kyrylo Rudnev</span>
<span class="t" style="left:1170.70px;top:741px;font-size:10.9px;line-height:15px;color:#0f5899;letter-spacing:-0.141px;">380675051303</span>
<span class="t" style="left:1272.80px;top:741px;font-size:10.9px;line-height:15px;color:#0f5899;letter-spacing:0.104px;">Claim registration</span>
<span class="t" style="left:1495.80px;top:740px;font-size:11.9px;line-height:16px;color:#333;letter-spacing:0.470px;">---</span>
<span class="t" style="left:1598.30px;top:740px;font-size:11.9px;line-height:16px;color:#333;letter-spacing:-0.028px;">Звичайний</span>
<span class="t" style="left:1700.00px;top:740px;font-size:11.9px;line-height:16px;color:#333;letter-spacing:-0.286px;">06.07.2023 18:30</span>
<div class="a" style="left:1042.3px;top:762px;width:755px;height:1px;background:#ededed;"></div>
<span class="t" style="left:1067.70px;top:772px;font-size:11.9px;line-height:16px;color:#333;letter-spacing:0.470px;">---</span>
<span class="t" style="left:1170.70px;top:773px;font-size:10.9px;line-height:15px;color:#0f5899;letter-spacing:-0.141px;">380675051303</span>
<span class="t" style="left:1272.80px;top:773px;font-size:10.9px;line-height:15px;color:#0f5899;letter-spacing:0.070px;">Incoming Call</span>
<span class="t" style="left:1495.80px;top:773px;font-size:10.9px;line-height:15px;color:#0f5899;letter-spacing:-0.066px;width:95.6px;overflow:hidden;">Lidiya Kronikovska...</span>
<span class="t" style="left:1598.30px;top:772px;font-size:11.9px;line-height:16px;color:#333;letter-spacing:-0.028px;">Звичайний</span>
<span class="t" style="left:1700.00px;top:772px;font-size:11.9px;line-height:16px;color:#333;letter-spacing:-0.286px;">06.07.2023 18:30</span>
<div class="a" style="left:1042.3px;top:794px;width:755px;height:1px;background:#ededed;"></div>
<span class="t" style="left:1067.70px;top:804px;font-size:11.9px;line-height:16px;color:#333;letter-spacing:0.470px;">---</span>
<span class="t" style="left:1170.70px;top:805px;font-size:10.9px;line-height:15px;color:#0f5899;letter-spacing:-0.141px;">380932574886</span>
<span class="t" style="left:1272.80px;top:805px;font-size:10.9px;line-height:15px;color:#0f5899;letter-spacing:0.206px;">Incoming without answer</span>
<span class="t" style="left:1495.80px;top:805px;font-size:10.9px;line-height:15px;color:#0f5899;letter-spacing:-0.066px;width:95.6px;overflow:hidden;">Lidiya Kronikovska...</span>
<span class="t" style="left:1598.30px;top:804px;font-size:11.9px;line-height:16px;color:#333;letter-spacing:-0.028px;">Звичайний</span>
<span class="t" style="left:1700.00px;top:804px;font-size:11.9px;line-height:16px;color:#333;letter-spacing:-0.286px;">06.07.2023 18:30</span>
<div class="a" style="left:1042.3px;top:826px;width:755px;height:1px;background:#ededed;"></div>
<span class="t" style="left:1067.70px;top:836px;font-size:11.9px;line-height:16px;color:#333;letter-spacing:-0.278px;">SMART Operat...</span>
<span class="t" style="left:1170.70px;top:837px;font-size:10.9px;line-height:15px;color:#0f5899;letter-spacing:-0.141px;">380675051303</span>
<span class="t" style="left:1272.80px;top:837px;font-size:10.9px;line-height:15px;color:#0f5899;letter-spacing:0.029px;">Incoming_Answer</span>
<span class="t" style="left:1495.80px;top:837px;font-size:10.9px;line-height:15px;color:#0f5899;letter-spacing:-0.066px;width:95.6px;overflow:hidden;">Lidiya Kronikovska...</span>
<span class="t" style="left:1598.30px;top:836px;font-size:11.9px;line-height:16px;color:#333;letter-spacing:-0.028px;">Звичайний</span>
<span class="t" style="left:1700.00px;top:836px;font-size:11.9px;line-height:16px;color:#333;letter-spacing:-0.286px;">06.07.2023 18:30</span>
<div class="a" style="left:1042.3px;top:858px;width:755px;height:1px;background:#ededed;"></div>
<span class="t" style="left:1067.70px;top:868px;font-size:11.9px;line-height:16px;color:#333;letter-spacing:-0.286px;">SMART Trial M...</span>
<span class="t" style="left:1170.70px;top:868px;font-size:11.9px;line-height:16px;color:#333;letter-spacing:0.470px;">---</span>
<span class="t" style="left:1272.80px;top:869px;font-size:10.9px;line-height:15px;color:#0f5899;letter-spacing:-0.010px;">Partnership suggession</span>
<span class="t" style="left:1495.80px;top:869px;font-size:10.9px;line-height:15px;color:#0f5899;letter-spacing:0.075px;width:95.6px;overflow:hidden;">2022-04-11 1013L9</span>
<span class="t" style="left:1598.30px;top:868px;font-size:11.9px;line-height:16px;color:#333;letter-spacing:-0.028px;">Звичайний</span>
<span class="t" style="left:1700.00px;top:868px;font-size:11.9px;line-height:16px;color:#333;letter-spacing:-0.286px;">06.07.2023 18:30</span>
<div class="a" style="left:1042.3px;top:890px;width:755px;height:1px;background:#ededed;"></div>
<span class="t" style="left:1067.70px;top:900px;font-size:11.9px;line-height:16px;color:#333;letter-spacing:0.470px;">---</span>
<span class="t" style="left:1170.70px;top:900px;font-size:11.9px;line-height:16px;color:#333;letter-spacing:0.470px;">---</span>
<span class="t" style="left:1272.80px;top:901px;font-size:10.9px;line-height:15px;color:#0f5899;letter-spacing:0.066px;">Phone Call Distribute</span>
<span class="t" style="left:1495.80px;top:901px;font-size:10.9px;line-height:15px;color:#0f5899;letter-spacing:-0.103px;">SMART Activity</span>
<span class="t" style="left:1598.30px;top:900px;font-size:11.9px;line-height:16px;color:#333;letter-spacing:-0.028px;">Звичайний</span>
<span class="t" style="left:1700.00px;top:900px;font-size:11.9px;line-height:16px;color:#333;letter-spacing:-0.286px;">06.07.2023 18:30</span>
<div class="a" style="left:1042.3px;top:922px;width:755px;height:1px;background:#ededed;"></div>
<span class="t" style="left:1067.70px;top:932px;font-size:11.9px;line-height:16px;color:#333;letter-spacing:0.036px;">Андрій Рябчун</span>
<span class="t" style="left:1170.70px;top:932px;font-size:11.9px;line-height:16px;color:#333;letter-spacing:0.470px;">---</span>
<span class="t" style="left:1272.80px;top:933px;font-size:10.9px;line-height:15px;color:#0f5899;letter-spacing:0.066px;">Phone Call Distribute</span>
<span class="t" style="left:1495.80px;top:933px;font-size:10.9px;line-height:15px;color:#0f5899;letter-spacing:-0.103px;">SMART Activity</span>
<span class="t" style="left:1598.30px;top:932px;font-size:11.9px;line-height:16px;color:#333;letter-spacing:-0.028px;">Звичайний</span>
<span class="t" style="left:1700.00px;top:932px;font-size:11.9px;line-height:16px;color:#333;letter-spacing:-0.286px;">06.07.2023 18:30</span>
<div class="a" style="left:1042.3px;top:954px;width:755px;height:1px;background:#ededed;"></div>
</section>
</main>
</body></html>
